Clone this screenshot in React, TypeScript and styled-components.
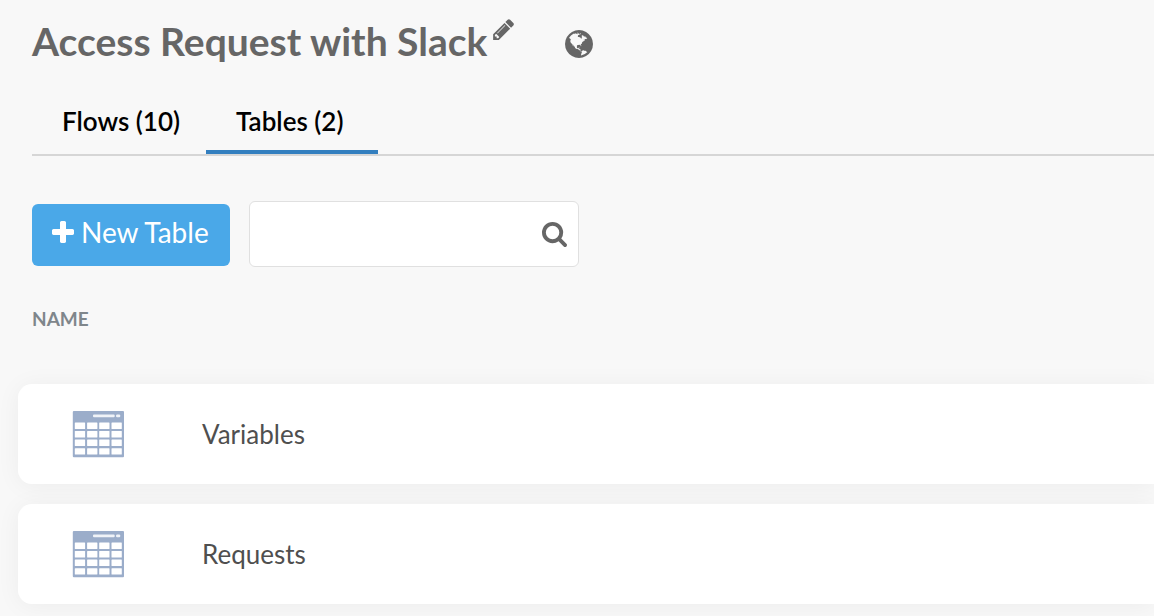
import React, { useState } from "react";
import styled, { createGlobalStyle } from "styled-components";

const GlobalStyle = createGlobalStyle`
  * { box-sizing: border-box; }
  body {
    margin: 0;
    background: #f8f8f8;
    color: #4f4f4f;
    font-family: Lato, "Open Sans", sans-serif;
  }
`;

const Page = styled.main`
  padding: 16px 0 12px 18px;
  overflow-x: hidden;
`;

const Inset = styled.div`
  padding-left: 14px;
`;

const Header = styled.header`
  display: flex;
  align-items: flex-start;
  height: 80px;
`;

const Title = styled.h1`
  margin: 0;
  color: #666;
  font-size: 39px;
  line-height: 50px;
  font-weight: 700;
  white-space: nowrap;
`;

const IconButton = styled.button`
  display: flex;
  padding: 0;
  border: 0;
  background: none;
  color: #666;
  cursor: pointer;
`;

const EditButton = styled(IconButton)`
  margin: 3px 0 0 6px;
`;

const GlobeButton = styled(IconButton)`
  margin: 14px 0 0 51px;
`;

const Tabs = styled.nav`
  display: flex;
  gap: 2px;
  border-bottom: 2px solid #d6d6d6;
`;

const Tab = styled.a<{ $active?: boolean }>`
  min-width: 172px;
  padding: 8px 24px 12px 30px;
  border-bottom: 4px solid ${(p) => (p.$active ? "#337fbf" : "transparent")};
  color: #000;
  font-size: 26px;
  line-height: 34px;
  font-weight: 600;
  text-decoration: none;
  white-space: nowrap;
`;

const Toolbar = styled.div`
  display: flex;
  align-items: center;
  gap: 19px;
  padding-top: 45px;
`;

const NewButton = styled.button`
  display: flex;
  align-items: center;
  gap: 7px;
  height: 62px;
  min-width: 198px;
  margin-top: 2px;
  padding: 0 19px 6px 20px;
  border: 0;
  border-radius: 6px;
  background: #4aa8e8;
  color: #fff;
  font: 400 28px/36px Lato, sans-serif;
  white-space: nowrap;
  cursor: pointer;
`;

const SearchBox = styled.label`
  display: flex;
  align-items: center;
  width: 330px;
  height: 66px;
  padding: 0 11px;
  border: 1px solid #e0e0e0;
  border-radius: 6px;
  background: #fff;
  color: #666;
`;

const SearchInput = styled.input`
  flex: 1;
  min-width: 0;
  height: 48px;
  border: 0;
  outline: 0;
  background: transparent;
  color: #4f4f4f;
  font: 400 26px/34px Lato, sans-serif;
`;

const DataTable = styled.table`
  width: 100%;
  margin-top: 20px;
  border-collapse: separate;
  border-spacing: 0 20px;
`;

const NameHeading = styled.th`
  height: 57px;
  padding: 0 0 0 14px;
  vertical-align: top;
  text-align: left;
  color: #7f868b;
  font-size: 19px;
  line-height: 24px;
  font-weight: 700;
`;

const Row = styled.tr`
  border-radius: 14px 0 0 14px;
  box-shadow: 0 2px 24px rgba(0, 0, 0, 0.05);
`;

const IconCell = styled.td`
  width: 184px;
  height: 100px;
  padding: 0 0 0 54px;
  border-radius: 14px 0 0 14px;
  background: #fff;
  line-height: 0;
`;

const NameCell = styled.td`
  padding: 0;
  background: #fff;
  font-size: 26px;
  line-height: 34px;
`;

const PencilIcon = () => (
  <svg width="21" height="21" viewBox="128 127 1516 1537" fill="currentColor" aria-hidden="true">
    <path d="M491 1536l91-91-235-235-91 91v107h128v128h107zm523-928q0-22-22-22-10 0-17 7l-542 542q-7 7-7 17 0 22 22 22 10 0 17-7l542-542q7-7 7-17zm-54-192l416 416-832 832h-416v-416zm683 96q0 53-37 90l-166 166-416-416 166-165q36-38 90-38 53 0 91 38l235 234q37 39 37 91z" />
  </svg>
);

const GlobeIcon = () => (
  <svg width="28" height="28" viewBox="128 128 1536 1536" fill="currentColor" aria-hidden="true">
    <path d="M896 128q209 0 385.500 103t279.500 279.500 103 385.500-103 385.500-279.500 279.500-385.500 103-385.500-103-279.500-279.500-103-385.500 103-385.500 279.500-279.500 385.500-103zm274 521q-2 1-9.500 9.500t-13.500 9.500q2 0 4.500-5t5-11 3.500-7q6-7 22-15 14-6 52-12 34-8 51 11-2-2 9.500-13t14.500-12q3-2 15-4.500t15-7.500l2-22q-12 1-17.500-7t-6.500-21q0 2-6 8 0-7-4.500-8t-11.500 1-9 1q-10-3-15-7.500t-8-16.500-4-15q-2-5-9.500-11t-9.500-10q-1-2-2.500-5.500t-3-6.500-4-5.500-5.500-2.500-7 5-7.500 10-4.500 5q-3-2-6-1.500t-4.500 1-4.500 3-5 3.500q-3 2-8.500 3t-8.500 2q15-5-1-11-10-4-16-3 9-4 7.500-12t-8.500-14h5q-1-4-8.500-8.500t-17.500-8.500-13-6q-8-5-34-9.500t-33-.5q-5 6-4.500 10.500t4 14 3.500 12.500q1 6-5.500 13t-6.500 12q0 7 14 15.500t10 21.500q-3 8-16 16t-16 12q-5 8-1.500 18.500t10.500 16.500q2 2 1.500 4t-3.500 4.500-5.500 4-6.500 3.500l-3 2q-11 5-20.500-6t-13.500-26q-7-25-16-30-23-8-29 1-5-13-41-26-25-9-58-4 6-1 0-15-7-15-19-12 3-6 4-17.500t1-13.500q3-13 12-23 1-1 7-8.500t9.500-13.500.5-6q35 4 50-11 5-5 11.500-17t10.500-17q9-6 14-5.500t14.500 5.500 14.500 5q14 1 15.500-11t-7.500-20q12 1 3-17-4-7-8-9-12-4-27 5-8 4 2 8-1-1-9.500 10.500t-16.500 17.500-16-5q-1-1-5.500-13.500t-9.500-13.500q-8 0-16 15 3-8-11-15t-24-8q19-12-8-27-7-4-20.500-5t-19.500 4q-5 7-5.500 11.500t5 8 10.500 5.500 11.500 4 8.500 3q14 10 8 14-2 1-8.500 3.500t-11.500 4.500-6 4q-3 4 0 14t-2 14q-5-5-9-17.500t-7-16.500q7 9-25 6l-10-1q-4 0-16 2t-20.500 1-13.500-8q-4-8 0-20 1-4 4-2-4-3-11-9.500t-10-8.500q-46 15-94 41 6 1 12-1 5-2 13-6.500t10-5.500q34-14 42-7l5-5q14 16 20 25-7-4-30-1-20 6-22 12 7 12 5 18-4-3-11.500-10t-14.500-11-15-5q-16 0-22 1-146 80-235 222 7 7 12 8 4 1 5 9t2.500 11 11.500-3q9 8 3 19 1-1 44 27 19 17 21 21 3 11-10 18-1-2-9-9t-9-4q-3 5 .5 18.500t10.500 12.500q-7 0-9.500 16t-2.500 35.500-1 23.500l2 1q-3 12 5.500 34.500t21.500 19.500q-13 3 20 43 6 8 8 9 3 2 12 7.500t15 10 10 10.500q4 5 10 22.500t14 23.500q-2 6 9.500 20t10.500 23q-1 0-2.500 1t-2.500 1q3 7 15.500 14t15.500 13q1 3 2 10t3 11 8 2q2-20-24-62-15-25-17-29-3-5-5.500-15.500t-4.500-14.500q2 0 6 1.500t8.500 3.500 7.500 4 2 3q-3 7 2 17.500t12 18.500 17 19 12 13q6 6 14 19.500t0 13.500q9 0 20 10.500t17 19.500q5 8 8 26t5 24q2 7 8.500 13.500t12.500 9.500l16 8 13 7q5 2 18.500 10.500t21.500 11.500q10 4 16 4t14.500-2.500 13.500-3.500q15-2 29 15t21 21q36 19 55 11-2 1 .5 7.500t8 15.500 9 14.500 5.500 8.500q5 6 18 15t18 15q6-4 7-9-3 8 7 20t18 10q14-3 14-32-31 15-49-18 0-1-2.500-5.500t-4-8.500-2.500-8.500 0-7.500 5-3q9 0 10-3.500t-2-12.500-4-13q-1-8-11-20t-12-15q-5 9-16 8t-16-9q0 1-1.500 5.500t-1.500 6.500q-13 0-15-1 1-3 2.500-17.500t3.500-22.500q1-4 5.500-12t7.500-14.500 4-12.500-4.500-9.500-17.500-2.500q-19 1-26 20-1 3-3 10.500t-5 11.500-9 7q-7 3-24 2t-24-5q-13-8-22.500-29t-9.500-37q0-10 2.500-26.500t3-25-5.500-24.500q3-2 9-9.500t10-10.500q2-1 4.500-1.500t4.500 0 4-1.500 3-6q-1-1-4-3-3-3-4-3 7 3 28.500-1.500t27.500 1.500q15 11 22-2 0-1-2.500-9.500t-.5-13.500q5 27 29 9 3 3 15.500 5t17.500 5q3 2 7 5.500t5.500 4.500 5-.5 8.500-6.500q10 14 12 24 11 40 19 44 7 3 11 2t4.500-9.500 0-14-1.500-12.500l-1-8v-18l-1-8q-15-3-18.500-12t1.500-18.500 15-18.500q1-1 8-3.500t15.500-6.500 12.500-8q21-19 15-35 7 0 11-9-1 0-5-3t-7.500-5-4.500-2q9-5 2-16 5-3 7.500-11t7.500-10q9 12 21 2 7-8 1-16 5-7 20.500-10.500t18.500-9.500q7 2 8-2t1-12 3-12q4-5 15-9t13-5l17-11q3-4 0-4 18 2 31-11 10-11-6-20 3-6-3-9.500t-15-5.500q3-1 11.500-.5t10.500-1.500q15-10-7-16-17-5-43 12zm-163 877q206-36 351-189-3-3-12.500-4.500t-12.500-3.500q-18-7-24-8 1-7-2.500-13t-8-9-12.500-8-11-7q-2-2-7-6t-7-5.500-7.500-4.500-8.500-2-10 1l-3 1q-3 1-5.500 2.500t-5.500 3-4 3 0 2.500q-21-17-36-22-5-1-11-5.500t-10.500-7-10-1.500-11.500 7q-5 5-6 15t-2 13q-7-5 0-17.500t2-18.500q-3-6-10.500-4.500t-12 4.500-11.500 8.500-9 6.500-8.500 5.500-8.500 7.500q-3 4-6 12t-5 11q-2-4-11.500-6.500t-9.500-5.500q2 10 4 35t5 38q7 31-12 48-27 25-29 40-4 22 12 26 0 7-8 20.500t-7 21.500q0 6 2 16z" />
  </svg>
);

const PlusIcon = () => (
  <svg width="22" height="22" viewBox="192 128 1408 1408" fill="currentColor" aria-hidden="true">
    <path d="M1600 736v192q0 40-28 68t-68 28h-416v416q0 40-28 68t-68 28h-192q-40 0-68-28t-28-68v-416h-416q-40 0-68-28t-28-68v-192q0-40 28-68t68-28h416v-416q0-40 28-68t68-28h192q40 0 68 28t28 68v416h416q40 0 68 28t28 68z" />
  </svg>
);

const SearchIcon = () => (
  <svg width="25" height="25" viewBox="64 128 1664 1664" fill="currentColor" aria-hidden="true">
    <path d="M1216 832q0-185-131.5-316.5t-316.5-131.5-316.5 131.5-131.5 316.5 131.5 316.5 316.5 131.5 316.5-131.5 131.5-316.5zm512 832q0 52-38 90t-90 38q-54 0-90-38l-343-342q-179 124-399 124-143 0-273.5-55.5t-225-150-150-225-55.5-273.5 55.5-273.5 150-225 225-150 273.5-55.5 273.5 55.5 225 150 150 225 55.5 273.5q0 220-124 399l343 343q37 37 37 90z" />
  </svg>
);

const gridColumns = [2.8, 15.1, 27.2, 39.5];
const gridRows = [12.5, 21, 29.6, 38.2];

const TableIcon = () => (
  <svg width="53" height="48" viewBox="0 0 53 48" aria-hidden="true">
    <rect x="0.8" y="1" width="51.2" height="46.3" rx="1" fill="#9badca" />
    <rect x="21" y="4.6" width="21.7" height="2.6" rx="1" fill="#f0f3f8" />
    <rect x="44" y="4.6" width="4.3" height="2.6" rx="1.2" fill="#f0f3f8" />
    {gridRows.map((y) =>
      gridColumns.map((x) => (
        <rect key={`${x}-${y}`} x={x} y={y} width="10.3" height="6.4" rx="0.5" fill="#fff" />
      ))
    )}
  </svg>
);

const tables = ["Variables", "Requests"];

export default function App() {
  const [query, setQuery] = useState("");
  const rows = tables.filter((name) => name.toLowerCase().includes(query.toLowerCase()));

  return (
    <>
      <GlobalStyle />
      <Page>
        <Inset>
          <Header>
            <Title>Access Request with Slack</Title>
            <EditButton type="button" aria-label="Edit name">
              <PencilIcon />
            </EditButton>
            <GlobeButton type="button" aria-label="Language">
              <GlobeIcon />
            </GlobeButton>
          </Header>
          <Tabs>
            <Tab href="#flows">Flows (10)</Tab>
            <Tab href="#tables" $active aria-current="page">
              Tables (2)
            </Tab>
          </Tabs>
          <Toolbar>
            <NewButton type="button">
              <PlusIcon />
              New Table
            </NewButton>
            <SearchBox>
              <SearchInput
                type="text"
                aria-label="Search tables"
                value={query}
                onChange={(e) => setQuery(e.target.value)}
              />
              <SearchIcon />
            </SearchBox>
          </Toolbar>
        </Inset>
        <DataTable>
          <thead>
            <tr>
              <NameHeading scope="col" colSpan={2}>
                NAME
              </NameHeading>
            </tr>
          </thead>
          <tbody>
            {rows.map((name) => (
              <Row key={name}>
                <IconCell>
                  <TableIcon />
                </IconCell>
                <NameCell>{name}</NameCell>
              </Row>
            ))}
          </tbody>
        </DataTable>
      </Page>
    </>
  );
}
